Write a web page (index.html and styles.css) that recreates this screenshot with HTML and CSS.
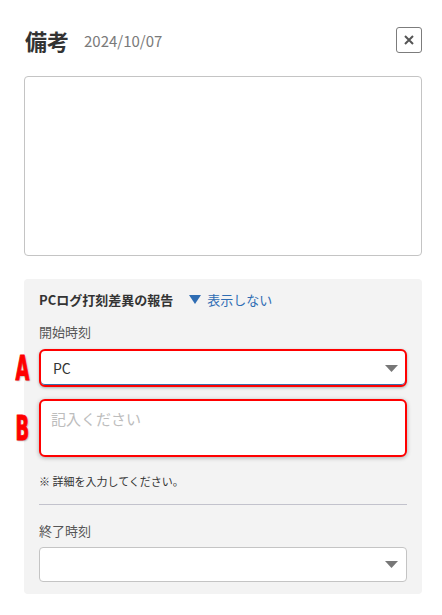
FILE: index.html
```html
<!DOCTYPE html>
<html lang="ja">
<head>
    <meta charset="UTF-8">
    <meta name="viewport" content="width=device-width, initial-scale=1.0">
    <title>備考</title>
    <link rel="stylesheet" href="styles.css">
</head>
<body>

    <div class="modal">
        <!-- Header -->
        <div class="modal-head">
            <h1>備考</h1>
            <span class="date">2024/10/07</span>
            <button class="close" type="button" aria-label="閉じる">
                <svg width="10" height="10" viewBox="0 0 10 10">
                    <path d="M1 1 L9 9 M9 1 L1 9" stroke="#555" stroke-width="2" fill="none"/>
                </svg>
            </button>
        </div>

        <textarea class="memo"></textarea>

        <!-- PC log report -->
        <div class="report">
            <div class="report-head">
                <span class="report-title">PCログ打刻差異の報告</span>
                <a class="toggle" href="#">
                    <svg width="12" height="9" viewBox="0 0 12 9"><path d="M0 0 H12 L6 9 Z" fill="#2f6db3"/></svg>
                    表示しない
                </a>
            </div>

            <div class="field-label">開始時刻</div>
            <div class="select marked">
                <span>PC</span>
                <svg class="caret" width="13" height="7" viewBox="0 0 13 7"><path d="M0 0 H13 L6.5 7 Z" fill="#777"/></svg>
                <span class="mark">A</span>
            </div>

            <div class="input marked">
                <span class="placeholder">記入ください</span>
                <span class="mark">B</span>
            </div>

            <p class="note">※ 詳細を入力してください。</p>

            <hr class="divider">

            <div class="field-label">終了時刻</div>
            <div class="select plain">
                <span></span>
                <svg class="caret" width="13" height="7" viewBox="0 0 13 7"><path d="M0 0 H13 L6.5 7 Z" fill="#777"/></svg>
            </div>
        </div>
    </div>

</body>
</html>
```

FILE: styles.css
```css
/* Переменные */
:root {
    --text-color: #333333;
    --text-sub: #555555;
    --text-light: #7a7a7a;
    --border-color: #c4c4c4;
    --panel-bg: #f3f3f3;
    --link-color: #2f6db3;
    --mark-color: #ff0000;
}

* {
    margin: 0;
    padding: 0;
    box-sizing: border-box;
}

body {
    font-family: "Noto Sans CJK JP", "Noto Sans", sans-serif;
    color: var(--text-color);
    background-color: #ffffff;
}

.modal {
    padding: 27px 20px 0 24px;
    display: flex;
    flex-direction: column;
}

/* Header */
.modal-head {
    display: flex;
    align-items: center;
    height: 26px;
}

.modal-head h1 {
    font-size: 22px;
    font-weight: 700;
    line-height: 26px;
    margin-left: 1px;
}

.date {
    font-size: 15px;
    color: var(--text-light);
    margin-left: 15px;
}

.close {
    margin-left: auto;
    width: 26px;
    height: 26px;
    border: 1px solid #7c7c7c;
    border-radius: 3px;
    background: #ffffff;
    display: flex;
    align-items: center;
    justify-content: center;
}

.memo {
    margin-top: 23px;
    height: 180px;
    width: 398px;
    border: 1px solid var(--border-color);
    border-radius: 4px;
    resize: none;
    background: #ffffff;
}

/* Report panel */
.report {
    margin-top: 23px;
    width: 398px;
    background-color: var(--panel-bg);
    border-radius: 4px;
    padding: 10px 15px 12px 15px;
}

.report-head {
    display: flex;
    align-items: center;
    height: 20px;
}

.report-title {
    font-size: 13px;
    font-weight: 700;
}

.toggle {
    margin-left: 16px;
    display: flex;
    align-items: center;
    gap: 6px;
    font-size: 13px;
    color: var(--link-color);
    text-decoration: none;
}

.field-label {
    font-size: 13px;
    line-height: 20px;
    color: var(--text-sub);
    margin-top: 13px;
}

.select {
    position: relative;
    display: flex;
    align-items: center;
    justify-content: space-between;
    background: #ffffff;
    font-size: 14px;
}

.select .caret {
    flex-shrink: 0;
}

.select.marked {
    margin-top: 7px;
    height: 38px;
    border: 2px solid var(--mark-color);
    border-radius: 6px;
    padding: 0 7px 0 12px;
    box-shadow: inset 0 -1px 0 #3a6ea8, 0 1px 3px rgba(0, 0, 0, 0.3);
}

.select.plain {
    margin-top: 6px;
    height: 35px;
    border: 1px solid var(--border-color);
    border-radius: 4px;
    padding: 0 8px 0 12px;
}

.input {
    position: relative;
    margin-top: 12px;
    height: 58px;
    background: #ffffff;
    border: 2px solid var(--mark-color);
    border-radius: 6px;
    padding: 5px 10px;
    box-shadow: 0 1px 4px rgba(0, 0, 0, 0.3);
}

.placeholder {
    font-size: 15px;
    color: #bdbdbd;
}

/* Annotation letters */
.mark {
    position: absolute;
    left: -30px;
    top: 50%;
    transform: translateY(-50%) scaleX(0.6);
    font-family: "DejaVu Sans Condensed", "DejaVu Sans", sans-serif;
    font-weight: 900;
    font-size: 33px;
    line-height: 33px;
    color: var(--mark-color);
    -webkit-text-stroke: 1px var(--mark-color);
    text-shadow: 1px 1px 2px rgba(0, 0, 0, 0.35);
}

.note {
    margin-top: 16px;
    font-size: 11px;
    line-height: 16px;
}

.divider {
    margin-top: 15px;
    border: none;
    border-top: 1px solid #c2c2cc;
}

.divider + .field-label {
    margin-top: 16px;
}
```
